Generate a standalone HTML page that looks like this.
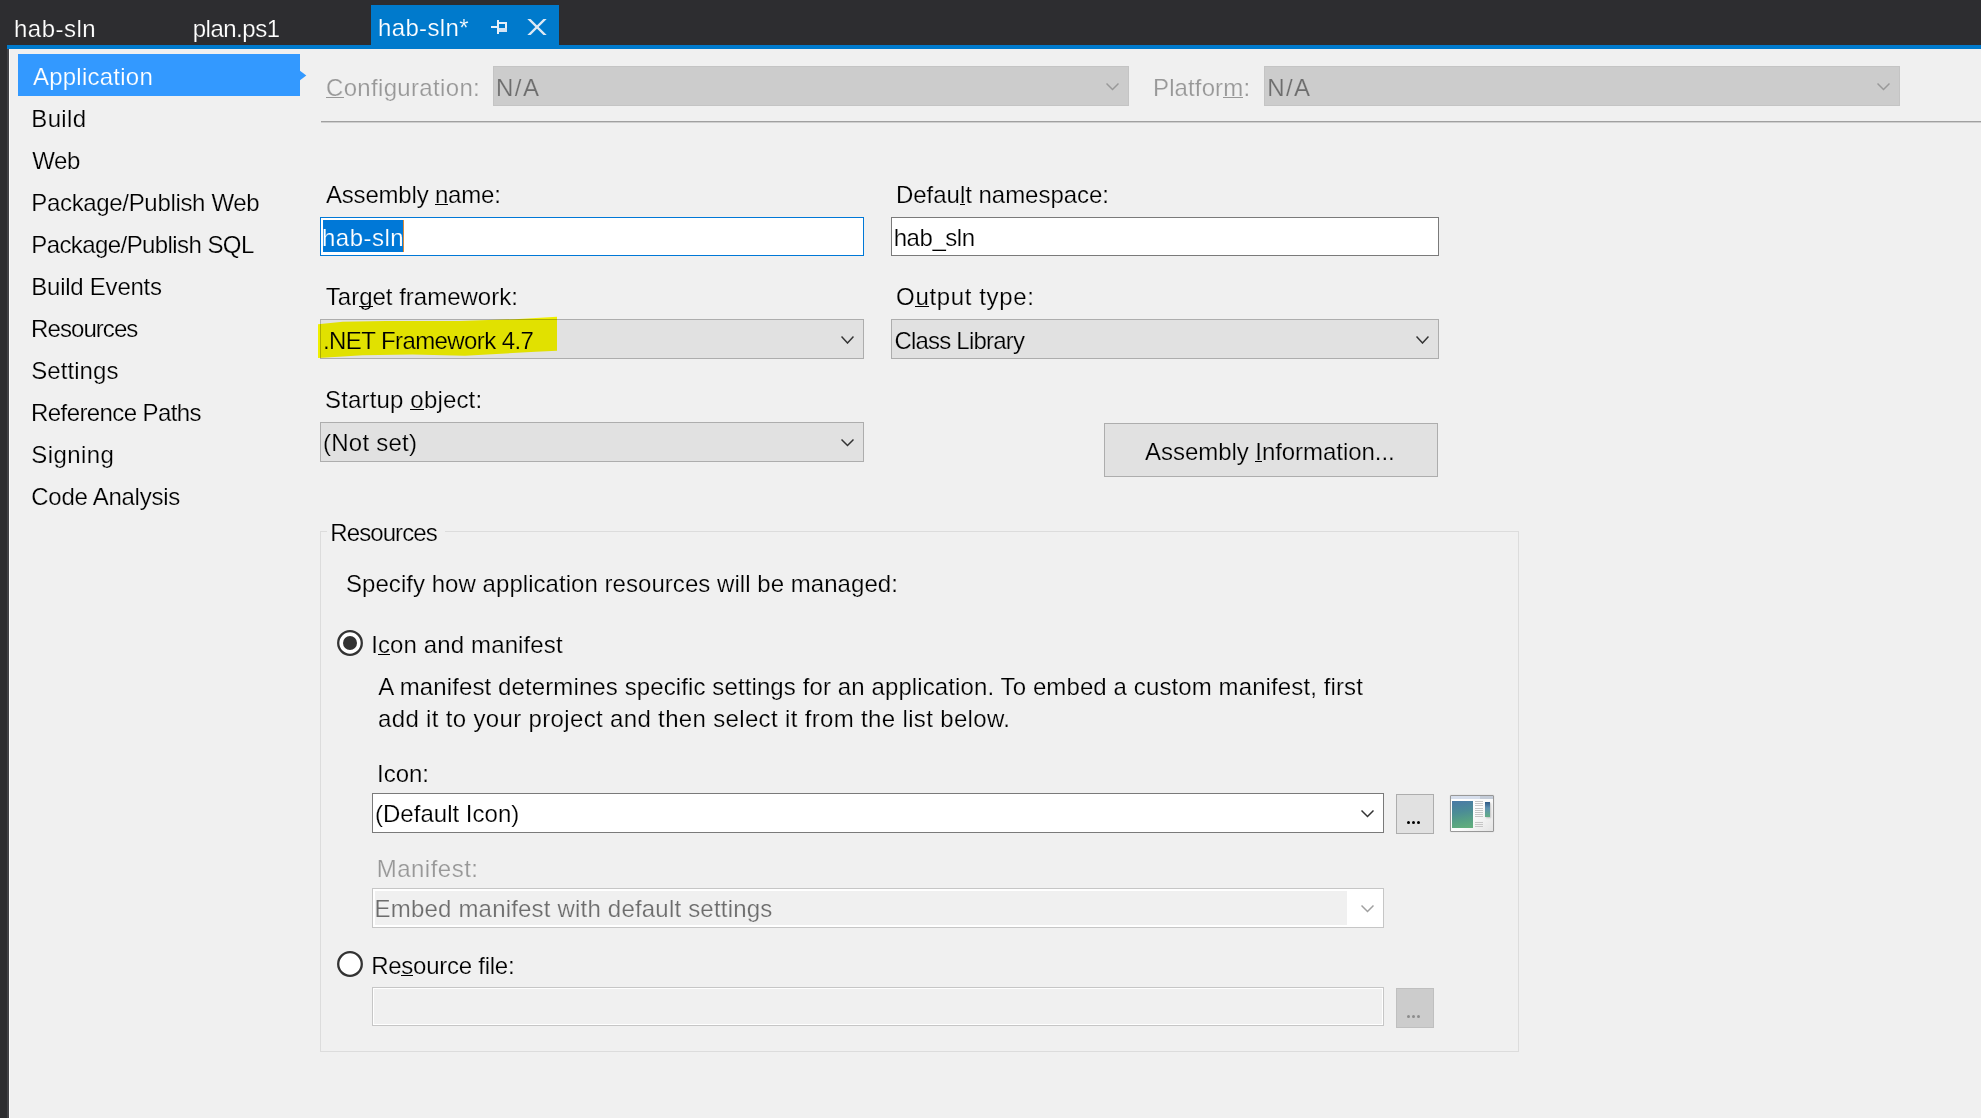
<!DOCTYPE html>
<html><head><meta charset="utf-8"><style>
html,body{margin:0;padding:0;width:1981px;height:1118px;overflow:hidden;background:#f0f0f0;}
.b{position:absolute;}
.t{position:absolute;white-space:nowrap;font-family:"Liberation Sans",sans-serif;font-size:24px;line-height:24px;}
u{text-decoration:none;position:relative;} u::after{content:'';position:absolute;left:0;right:0;top:23px;height:1px;background:currentColor;}
</style></head><body>
<div class="b" style="left:0px;top:0px;width:1981px;height:45px;background:#2d2d30"></div>
<div class="b" style="left:0px;top:0px;width:7px;height:1118px;background:#2d2d30"></div>
<div class="b" style="left:7px;top:49px;width:2px;height:1069px;background:#424246"></div>
<div class="b" style="left:9px;top:49px;width:1px;height:1069px;background:#fbfbfb"></div>
<div class="b" style="left:7px;top:45px;width:1974px;height:4px;background:#007acc"></div>
<div class="b" style="left:371px;top:5px;width:188px;height:44px;background:#007acc"></div>
<svg class="b" style="left:490px;top:19px" width="18" height="16" viewBox="490 19 18 16"><rect x="491" y="26" width="6" height="2" fill="#e8f0f8"/><rect x="497" y="20" width="2" height="14" fill="#e8f0f8"/><rect x="499" y="22" width="8" height="2" fill="#e8f0f8"/><rect x="505" y="22" width="2" height="10" fill="#e8f0f8"/><rect x="499" y="28" width="8" height="4" fill="#d4e4f4"/></svg>
<svg class="b" style="left:524px;top:16px" width="26" height="22" viewBox="524 16 26 22"><polygon points="527.3,19.1 530.6,19.1 546.7,34.9 543.4,34.9" fill="#dfe9f4"/><polygon points="543.4,19.1 546.7,19.1 530.6,34.9 527.3,34.9" fill="#dfe9f4"/></svg>
<div class="b" style="left:18px;top:54px;width:282px;height:42px;background:#3399ff"></div>
<svg class="b" style="left:299px;top:69px" width="9" height="13" viewBox="299 69 9 13"><polygon points="299,70 306.3,75.5 299,81" fill="#3399ff"/></svg>
<div class="b" style="left:493px;top:66px;width:636px;height:40px;background:#cccccc;border:1px solid #c4c4c4;box-sizing:border-box"></div>
<svg class="b" style="left:1106px;top:82px" width="13" height="9" viewBox="0 -1 13 9"><polyline points="0.5,0.5 6.5,6.5 12.5,0.5" fill="none" stroke="#999999" stroke-width="1.5"/></svg>
<div class="b" style="left:1264px;top:66px;width:636px;height:40px;background:#cccccc;border:1px solid #c4c4c4;box-sizing:border-box"></div>
<svg class="b" style="left:1877px;top:82px" width="13" height="9" viewBox="0 -1 13 9"><polyline points="0.5,0.5 6.5,6.5 12.5,0.5" fill="none" stroke="#999999" stroke-width="1.5"/></svg>
<div class="b" style="left:321px;top:121px;width:1660px;height:1px;background:#a0a0a0"></div>
<div class="b" style="left:321px;top:122px;width:1660px;height:1px;background:#cfcfcf"></div>
<div class="b" style="left:320px;top:217px;width:544px;height:39px;background:#fff;border:1px solid #0078d7;box-sizing:border-box"></div>
<div class="b" style="left:323px;top:220px;width:81px;height:32px;background:#0078d7"></div>
<div class="b" style="left:403px;top:220px;width:1px;height:32px;background:#d98a3a"></div>
<div class="b" style="left:891px;top:217px;width:548px;height:39px;background:#fff;border:1px solid #7a7a7a;box-sizing:border-box"></div>
<div class="b" style="left:320px;top:319px;width:544px;height:40px;background:#e1e1e1;border:1px solid #adadad;box-sizing:border-box"></div>
<svg class="b" style="left:316px;top:315px;mix-blend-mode:multiply" width="244" height="45" viewBox="316 315 244 45"><polygon points="318,324.2 342.8,321.8 386,320.9 459.6,321 514.7,319.2 557,316.8 557,350.7 535.7,351.7 464.9,355.7 412.4,354.6 362.5,355.3 342.8,356.6 318,358" fill="#ffff00"/></svg>
<svg class="b" style="left:841px;top:334.5px" width="13" height="9.5" viewBox="0 -1 13 9.5"><polyline points="0.5,0.5 6.5,7.0 12.5,0.5" fill="none" stroke="#333333" stroke-width="1.5"/></svg>
<div class="b" style="left:891px;top:319px;width:548px;height:40px;background:#e1e1e1;border:1px solid #adadad;box-sizing:border-box"></div>
<svg class="b" style="left:1416px;top:334.5px" width="13" height="9.5" viewBox="0 -1 13 9.5"><polyline points="0.5,0.5 6.5,7.0 12.5,0.5" fill="none" stroke="#333333" stroke-width="1.5"/></svg>
<div class="b" style="left:320px;top:422px;width:544px;height:40px;background:#e1e1e1;border:1px solid #adadad;box-sizing:border-box"></div>
<svg class="b" style="left:841px;top:438px" width="13" height="9" viewBox="0 -1 13 9"><polyline points="0.5,0.5 6.5,6.5 12.5,0.5" fill="none" stroke="#333333" stroke-width="1.5"/></svg>
<div class="b" style="left:1104px;top:423px;width:334px;height:54px;background:#e1e1e1;border:1px solid #adadad;box-sizing:border-box"></div>
<div class="b" style="left:320px;top:531px;width:1199px;height:521px;border:1px solid #dcdcdc;box-sizing:border-box"></div>
<div class="b" style="left:327px;top:528px;width:118px;height:7px;background:#f0f0f0"></div>
<svg class="b" style="left:335px;top:628px" width="30" height="30" viewBox="335 628 30 30"><circle cx="350" cy="643" r="11.8" fill="#fff" stroke="#333" stroke-width="2.3"/><circle cx="350" cy="643" r="7" fill="#333"/></svg>
<div class="b" style="left:372px;top:793px;width:1012px;height:40px;background:#fff;border:1px solid #7a7a7a;box-sizing:border-box"></div>
<svg class="b" style="left:1361px;top:809px" width="13" height="9" viewBox="0 -1 13 9"><polyline points="0.5,0.5 6.5,6.5 12.5,0.5" fill="none" stroke="#333333" stroke-width="1.5"/></svg>
<div class="b" style="left:1396px;top:794px;width:38px;height:40px;background:#e1e1e1;border:1px solid #adadad;box-sizing:border-box"></div>
<div class="b" style="left:1407px;top:821px;width:3px;height:3px;background:#000;border-radius:50%"></div>
<div class="b" style="left:1412px;top:821px;width:3px;height:3px;background:#000;border-radius:50%"></div>
<div class="b" style="left:1417px;top:821px;width:3px;height:3px;background:#000;border-radius:50%"></div>
<div class="b" style="left:1450px;top:795px;width:44px;height:37px;background:linear-gradient(135deg,#ffffff 0%,#fbfbfb 55%,#e4e4e4 100%);border:1px solid #989898;border-radius:1px;box-sizing:border-box;box-shadow:0 0 1px rgba(0,0,0,0.25)"></div>
<div class="b" style="left:1451px;top:796px;width:29px;height:3px;background:#d6deec"></div>
<div class="b" style="left:1480px;top:796px;width:13px;height:3px;background:#c4ccd8"></div>
<div class="b" style="left:1452px;top:801px;width:21px;height:27px;background:linear-gradient(170deg,#4a79a6 0%,#4b8c96 40%,#56a085 70%,#63b07b 100%)"></div>
<div class="b" style="left:1475px;top:801px;width:8px;height:1px;background:#c6c6c6"></div>
<div class="b" style="left:1475px;top:803px;width:8px;height:1px;background:#c6c6c6"></div>
<div class="b" style="left:1475px;top:805px;width:8px;height:1px;background:#c6c6c6"></div>
<div class="b" style="left:1475px;top:808px;width:8px;height:1px;background:#c6c6c6"></div>
<div class="b" style="left:1475px;top:810px;width:8px;height:1px;background:#c6c6c6"></div>
<div class="b" style="left:1475px;top:812px;width:8px;height:1px;background:#c6c6c6"></div>
<div class="b" style="left:1475px;top:814px;width:8px;height:1px;background:#c6c6c6"></div>
<div class="b" style="left:1475px;top:816px;width:8px;height:1px;background:#c6c6c6"></div>
<div class="b" style="left:1475px;top:822px;width:8px;height:1px;background:#c6c6c6"></div>
<div class="b" style="left:1475px;top:824px;width:8px;height:1px;background:#c6c6c6"></div>
<div class="b" style="left:1475px;top:826px;width:8px;height:1px;background:#c6c6c6"></div>
<div class="b" style="left:1485px;top:802px;width:5px;height:15px;background:linear-gradient(180deg,#2f5a86,#5e90b0 40%,#62ad84);box-shadow:1px 1px 2px rgba(0,0,0,0.2)"></div>
<div class="b" style="left:372px;top:888px;width:1012px;height:40px;background:#fff;border:1px solid #c6c6c6;box-sizing:border-box"></div>
<div class="b" style="left:375px;top:891px;width:972px;height:34px;background:#f0f0f0"></div>
<svg class="b" style="left:1361px;top:904px" width="13" height="9" viewBox="0 -1 13 9"><polyline points="0.5,0.5 6.5,6.5 12.5,0.5" fill="none" stroke="#a0a0a0" stroke-width="1.5"/></svg>
<svg class="b" style="left:335px;top:949px" width="30" height="30" viewBox="335 949 30 30"><circle cx="350" cy="964" r="11.8" fill="#fff" stroke="#333" stroke-width="2.3"/></svg>
<div class="b" style="left:372px;top:987px;width:1012px;height:39px;background:#f0f0f0;border:1px solid #c6c6c6;box-shadow:inset 0 0 0 1px #fff;box-sizing:border-box"></div>
<div class="b" style="left:1396px;top:988px;width:38px;height:40px;background:#cccccc;border:1px solid #bfbfbf;box-sizing:border-box"></div>
<div class="b" style="left:1407px;top:1015px;width:3px;height:3px;background:#8c8c8c;border-radius:50%"></div>
<div class="b" style="left:1412px;top:1015px;width:3px;height:3px;background:#8c8c8c;border-radius:50%"></div>
<div class="b" style="left:1417px;top:1015px;width:3px;height:3px;background:#8c8c8c;border-radius:50%"></div>
<div class="t" style="left:14.00px;top:17px;color:#fff;letter-spacing:0.500px;-webkit-text-stroke:0.2px #2d2d30;">hab-sln</div>
<div class="t" style="left:192.70px;top:17px;color:#fff;letter-spacing:-0.486px;-webkit-text-stroke:0.2px #2d2d30;">plan.ps1</div>
<div class="t" style="left:378.00px;top:16px;color:#fff;letter-spacing:0.357px;-webkit-text-stroke:0.2px #007acc;">hab-sln*</div>
<div class="t" style="left:32.90px;top:65px;color:#fff;letter-spacing:0.250px;-webkit-text-stroke:0.2px #3399ff;">Application</div>
<div class="t" style="left:31.35px;top:107px;color:#000;letter-spacing:0.325px;-webkit-text-stroke:0.2px #f0f0f0;">Build</div>
<div class="t" style="left:32.20px;top:149px;color:#000;letter-spacing:-0.375px;-webkit-text-stroke:0.2px #f0f0f0;">Web</div>
<div class="t" style="left:31.28px;top:191px;color:#000;letter-spacing:-0.331px;-webkit-text-stroke:0.2px #f0f0f0;">Package/Publish Web</div>
<div class="t" style="left:31.28px;top:233px;color:#000;letter-spacing:-0.583px;-webkit-text-stroke:0.2px #f0f0f0;">Package/Publish SQL</div>
<div class="t" style="left:31.28px;top:275px;color:#000;letter-spacing:-0.241px;-webkit-text-stroke:0.2px #f0f0f0;">Build Events</div>
<div class="t" style="left:31.10px;top:317px;color:#000;letter-spacing:-0.931px;-webkit-text-stroke:0.2px #f0f0f0;">Resources</div>
<div class="t" style="left:31.25px;top:359px;color:#000;letter-spacing:0.064px;-webkit-text-stroke:0.2px #f0f0f0;">Settings</div>
<div class="t" style="left:31.10px;top:401px;color:#000;letter-spacing:-0.600px;-webkit-text-stroke:0.2px #f0f0f0;">Reference Paths</div>
<div class="t" style="left:31.25px;top:443px;color:#000;letter-spacing:0.408px;-webkit-text-stroke:0.2px #f0f0f0;">Signing</div>
<div class="t" style="left:31.25px;top:485px;color:#000;letter-spacing:-0.258px;-webkit-text-stroke:0.2px #f0f0f0;">Code Analysis</div>
<div class="t" style="left:326.00px;top:76px;color:#989898;letter-spacing:0.331px;-webkit-text-stroke:0.2px #f0f0f0;"><u>C</u>onfiguration:</div>
<div class="t" style="left:496.00px;top:76px;color:#6d6d6d;letter-spacing:1.500px;-webkit-text-stroke:0.2px #cccccc;">N/A</div>
<div class="t" style="left:1153.00px;top:76px;color:#989898;letter-spacing:0.125px;-webkit-text-stroke:0.2px #f0f0f0;">Platfor<u>m</u>:</div>
<div class="t" style="left:1267.30px;top:76px;color:#6d6d6d;letter-spacing:1.350px;-webkit-text-stroke:0.2px #cccccc;">N/A</div>
<div class="t" style="left:326.00px;top:183px;color:#000;letter-spacing:-0.200px;-webkit-text-stroke:0.2px #f0f0f0;">Assembly <u>n</u>ame:</div>
<div class="t" style="left:322.00px;top:226px;color:#fff;letter-spacing:0.500px;-webkit-text-stroke:0.2px #0078d7;">hab-sln</div>
<div class="t" style="left:896.00px;top:183px;color:#000;letter-spacing:-0.029px;-webkit-text-stroke:0.2px #f0f0f0;">Defau<u>l</u>t namespace:</div>
<div class="t" style="left:893.70px;top:226px;color:#000;letter-spacing:-0.450px;-webkit-text-stroke:0.2px #ffffff;">hab_sln</div>
<div class="t" style="left:325.80px;top:285px;color:#000;letter-spacing:0.000px;-webkit-text-stroke:0.2px #f0f0f0;">Tar<u>g</u>et framework:</div>
<div class="t" style="left:323.00px;top:329px;color:#000;letter-spacing:-0.594px;-webkit-text-stroke:0.2px #e1e100;">.NET Framework 4.7</div>
<div class="t" style="left:896.10px;top:285px;color:#000;letter-spacing:0.636px;-webkit-text-stroke:0.2px #f0f0f0;">O<u>u</u>tput type:</div>
<div class="t" style="left:894.40px;top:329px;color:#000;letter-spacing:-0.783px;-webkit-text-stroke:0.2px #e1e1e1;">Class Library</div>
<div class="t" style="left:325.00px;top:388px;color:#000;letter-spacing:0.164px;-webkit-text-stroke:0.2px #f0f0f0;">Startup <u>o</u>bject:</div>
<div class="t" style="left:323.00px;top:431px;color:#000;letter-spacing:0.250px;-webkit-text-stroke:0.2px #e1e1e1;">(Not set)</div>
<div class="t" style="left:1145.10px;top:440px;color:#000;letter-spacing:-0.055px;-webkit-text-stroke:0.2px #e1e1e1;">Assembly <u>I</u>nformation...</div>
<div class="t" style="left:330.30px;top:521px;color:#000;letter-spacing:-0.913px;-webkit-text-stroke:0.2px #f0f0f0;">Resources</div>
<div class="t" style="left:346.00px;top:572px;color:#000;letter-spacing:0.045px;-webkit-text-stroke:0.2px #f0f0f0;">Specify how application resources will be managed:</div>
<div class="t" style="left:371.20px;top:633px;color:#000;letter-spacing:0.125px;-webkit-text-stroke:0.2px #f0f0f0;">I<u>c</u>on and manifest</div>
<div class="t" style="left:378.20px;top:674.5px;color:#000;letter-spacing:0.108px;-webkit-text-stroke:0.2px #f0f0f0;">A manifest determines specific settings for an application. To embed a custom manifest, first</div>
<div class="t" style="left:378.00px;top:707px;color:#000;letter-spacing:0.344px;-webkit-text-stroke:0.2px #f0f0f0;">add it to your project and then select it from the list below.</div>
<div class="t" style="left:377.00px;top:762px;color:#000;letter-spacing:0.000px;-webkit-text-stroke:0.2px #f0f0f0;">Icon:</div>
<div class="t" style="left:375.00px;top:801.5px;color:#000;letter-spacing:0.015px;-webkit-text-stroke:0.2px #ffffff;">(Default Icon)</div>
<div class="t" style="left:376.70px;top:857px;color:#989898;letter-spacing:0.487px;-webkit-text-stroke:0.2px #f0f0f0;">Manifest:</div>
<div class="t" style="left:374.50px;top:896.5px;color:#6d6d6d;letter-spacing:0.197px;-webkit-text-stroke:0.2px #f0f0f0;">Embed manifest with default settings</div>
<div class="t" style="left:371.20px;top:954px;color:#000;letter-spacing:-0.254px;-webkit-text-stroke:0.2px #f0f0f0;">Re<u>s</u>ource file:</div>
</body></html>
